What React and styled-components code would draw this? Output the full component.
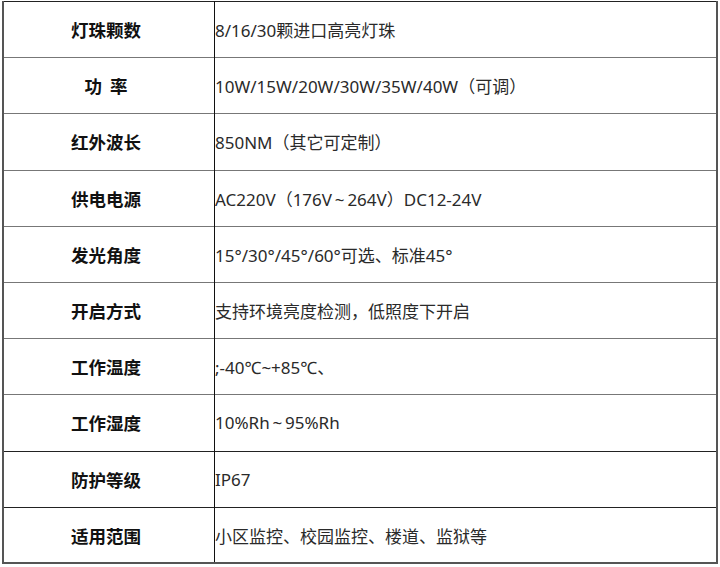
import styled, { createGlobalStyle } from "styled-components";

const GlobalStyle = createGlobalStyle`
  body {
    margin: 0;
    background: #fff;
    font-family: "Noto Sans", "Noto Sans CJK SC", sans-serif;
  }
`;

const Page = styled.div`
  padding: 1px 0 0 2px;
`;

const SpecTable = styled.table`
  width: 716px;
  border-collapse: collapse;
  border: 2px solid #555;
  border-top: 1px solid #222;
  table-layout: fixed;
`;

const Row = styled.tr`
  height: 56.2px;
  border-bottom: 1px solid ${(p) => (p.$dark ? "#222" : "#777")};
`;

const Label = styled.th`
  width: 204px;
  padding: 0 6px 0 0;
  border-right: 1px solid #111;
  font-family: "Noto Sans CJK SC", sans-serif;
  font-size: 17.5px;
  font-weight: 700;
  color: #111;
  text-align: center;
  white-space: pre;
`;

const Value = styled.td`
  padding: 0;
  font-size: 17px;
  font-weight: 400;
  color: #2a2a2a;
  text-align: left;
`;

const specs = [
  ["灯珠颗数", "8/16/30颗进口高亮灯珠"],
  ["功  率", "10W/15W/20W/30W/35W/40W（可调）"],
  ["红外波长", "850NM（其它可定制）"],
  ["供电电源", "AC220V（176V\u2009~\u2009264V）DC12-24V"],
  ["发光角度", "15°/30°/45°/60°可选、标准45°"],
  ["开启方式", "支持环境亮度检测，低照度下开启"],
  ["工作温度", ";-40℃~+85℃、"],
  ["工作湿度", "10%Rh\u2009~\u200995%Rh"],
  ["防护等级", "IP67"],
  ["适用范围", "小区监控、校园监控、楼道、监狱等"],
];

const App = () => {
  return (
    <Page>
      <GlobalStyle />
      <SpecTable>
        <tbody>
          {specs.map(([label, value], i) => (
            <Row key={label} $dark={i === 7 || i === 8}>
              <Label>{label}</Label>
              <Value>{value}</Value>
            </Row>
          ))}
        </tbody>
      </SpecTable>
    </Page>
  );
};

export default App;
